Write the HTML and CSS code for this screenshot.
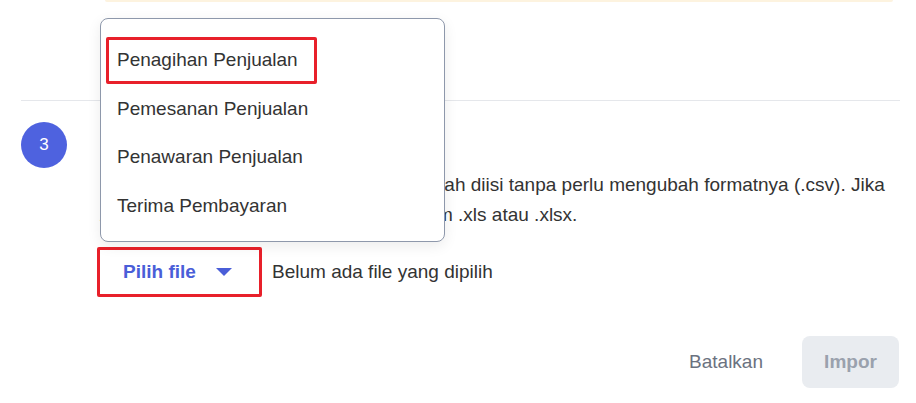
FILE: index.html
```html
<!DOCTYPE html>
<html lang="id">
<head>
<meta charset="utf-8">
<title>Impor</title>
<link rel="stylesheet" href="styles.css">
</head>
<body>
<div class="page">
  <div class="alert"></div>
  <div class="step2"></div>
  <div class="divider"></div>
  <div class="step3">
    <div class="num">3</div>
    <div class="content">
      <div class="title">Unggah file</div>
      <p class="desc">Unggah file template penjualan yang sudah diisi tanpa perlu mengubah formatnya (.csv). Jika Anda menggunakan Excel, unggah dalam .xls atau .xlsx.</p>
      <div class="filerow">
        <button class="pick">Pilih file <span class="caret"></span></button>
        <span class="nofile">Belum ada file yang dipilih</span>
      </div>
    </div>
  </div>
  <div class="footer">
    <button class="cancel">Batalkan</button>
    <button class="submit">Impor</button>
  </div>

  <div class="menu">
    <div class="item">Penagihan Penjualan</div>
    <div class="item">Pemesanan Penjualan</div>
    <div class="item">Penawaran Penjualan</div>
    <div class="item">Terima Pembayaran</div>
    <div class="mark"></div>
  </div>
</div>
</body>
</html>
```

FILE: styles.css
```css
* { box-sizing: border-box; }
html, body { margin: 0; padding: 0; background: #fff; }
body {
  font-family: "Liberation Sans", Arial, sans-serif;
  color: #333;
  width: 916px;
  height: 403px;
  overflow: hidden;
}
.page { position: relative; width: 916px; height: 403px; }

.alert {
  margin-left: 105px;
  width: 788px;
  height: 2px;
  background: #fdf3df;
  border-radius: 0 0 4px 4px;
}
.step2 { height: 98px; }
.divider {
  margin: 0 16px 0 21px;
  border-top: 1px solid #e5e7eb;
}

.step3 {
  display: flex;
  padding-left: 21px;
}
.num {
  flex: none;
  width: 46px;
  height: 46px;
  margin-top: 21px;
  border-radius: 50%;
  background: #4e62df;
  color: #fff;
  font-size: 17px;
  display: flex;
  align-items: center;
  justify-content: center;
}
.content {
  margin-left: 33px;
  padding-top: 19px;
  font-size: 19px;
}
.title { line-height: 30px; height: 30px; font-weight: 700; }
.desc {
  margin: 20px 0 0;
  width: 800px;
  line-height: 30px;
  color: #333;
}
.filerow {
  display: flex;
  align-items: center;
  gap: 10px;
  margin-top: 17px;
  margin-left: -3px;
}
.pick {
  display: flex;
  align-items: center;
  height: 50px;
  width: 165px;
  padding: 0 0 0 23px;
  border: 3px solid #e8202a;
  border-radius: 2px;
  background: #fff;
  color: #4a5ed8;
  font-family: inherit;
  font-size: 19px;
  font-weight: 700;
}
.caret {
  width: 0;
  height: 0;
  margin-left: 20px;
  border-left: 8px solid transparent;
  border-right: 8px solid transparent;
  border-top: 8px solid #4a5ed8;
}
.nofile { font-size: 19px; color: #333; }

.footer {
  display: flex;
  justify-content: flex-end;
  align-items: center;
  gap: 39px;
  margin-top: 39px;
  padding-right: 17px;
}
.cancel, .submit {
  font-family: inherit;
  font-size: 19px;
  border: none;
  background: none;
  padding: 0;
}
.cancel { color: #6b7280; }
.submit {
  width: 97px;
  height: 52px;
  background: #e9ecf0;
  color: #9aa1ad;
  font-weight: 700;
  border-radius: 8px;
}

.menu {
  position: absolute;
  left: 100px;
  top: 18px;
  width: 345px;
  height: 224px;
  padding: 17px 0 13px;
  background: #fff;
  border: 1px solid #8e98ab;
  border-radius: 8px;
  box-shadow: 0 4px 14px rgba(0, 0, 0, 0.08);
}
.item {
  height: 48.5px;
  line-height: 48.5px;
  padding-left: 16px;
  font-size: 19px;
  color: #333;
}
.mark {
  position: absolute;
  left: 5px;
  top: 18px;
  width: 211px;
  height: 47px;
  border: 3px solid #e8202a;
  border-radius: 2px;
}
```
